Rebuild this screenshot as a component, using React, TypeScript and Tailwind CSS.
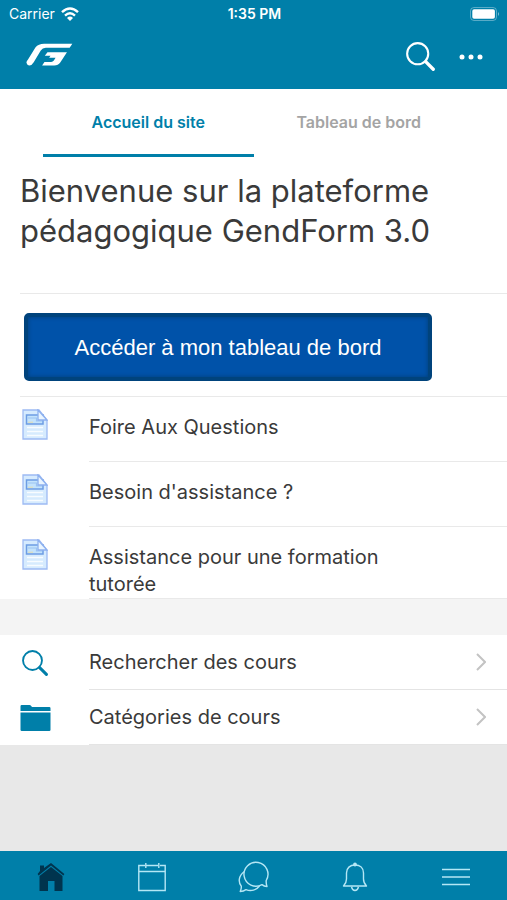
import type { ReactNode } from 'react';

type IconProps = { className?: string };

const LogoIcon = ({ className }: IconProps) => (
    <svg viewBox="80 126 140 68" className={className} fill="currentColor" aria-hidden="true">
        <path d="M82 186C80 183 83 179 86 175L108 139Q117 128 134 128H218L210 140H139Q129 140 124 148L103 183Q97 193 90 193Q84 193 82 186Z" />
        <path d="M144 153H202L182 184Q176 193 164 193H128L135 182H155Q160 182 163 178L168 170H149L153 164H136Z" />
    </svg>
);

const WifiIcon = ({ className }: IconProps) => (
    <svg viewBox="0 0 18 14" className={className} fill="none" stroke="currentColor" strokeWidth="2.4" aria-hidden="true">
        <path d="M1 5.2Q9-2.4 17 5.2M4 8.6Q9 4 14 8.6" />
        <path d="M6 11Q9 8.2 12 11L9 14Z" fill="currentColor" stroke="none" />
    </svg>
);

const BatteryIcon = ({ className }: IconProps) => (
    <svg viewBox="0 0 30 14" className={className} aria-hidden="true">
        <rect x="0.5" y="0.5" width="26" height="13" rx="3.5" fill="none" stroke="currentColor" opacity="0.35" />
        <rect x="2.3" y="2.3" width="22.6" height="9.4" rx="1.8" fill="currentColor" />
        <path d="M28 5Q30 7 28 9Z" fill="currentColor" opacity="0.5" />
    </svg>
);

const SearchIcon = ({ className }: IconProps) => (
    <svg viewBox="0 0 28 28" className={className} fill="none" stroke="currentColor" aria-hidden="true">
        <circle cx="11.3" cy="11.3" r="10.2" strokeWidth="2" />
        <path d="M19 19L26.3 26.3" strokeWidth="3.2" strokeLinecap="round" />
    </svg>
);

const DotsIcon = ({ className }: IconProps) => (
    <svg viewBox="0 0 24 6" className={className} fill="currentColor" aria-hidden="true">
        <circle cx="3" cy="3" r="2.5" />
        <circle cx="12" cy="3" r="2.5" />
        <circle cx="21" cy="3" r="2.5" />
    </svg>
);

const PageIcon = ({ className }: IconProps) => (
    <svg viewBox="0 0 26 31" className={className} aria-hidden="true">
        <path d="M1 1H17L25 11V30H1Z" fill="#d6ebfe" stroke="#9dbbf3" strokeWidth="1.3" />
        <path d="M4.5 6H21V15H4.5Z" fill="#c3e3fc" stroke="#6d9de3" strokeWidth="1.5" />
        <path d="M6 9H14.5V12H20" fill="none" stroke="#9cc4f2" strokeWidth="1.2" />
        <path d="M6 13.2H11" stroke="#e4deb3" />
        <path d="M16 1V11H25Z" fill="#e9f5ff" stroke="#8db0ef" strokeWidth="1.3" />
        <path d="M5 18.5H21M5 22.5H21M5 26.5H21" stroke="#f8fcff" strokeWidth="1.4" />
    </svg>
);

const FolderIcon = ({ className }: IconProps) => (
    <svg viewBox="0 0 31 26" className={className} fill="currentColor" aria-hidden="true">
        <path d="M0.5 6V1.2Q0.5 0 1.7 0H9.5Q10.5 0 11.2 1L12 2H29.3Q30.5 2 30.5 3.2V6Z" />
        <path d="M0.5 7.5H30.5V24.8Q30.5 26 29.3 26H1.7Q0.5 26 0.5 24.8Z" />
    </svg>
);

const ChevronIcon = ({ className }: IconProps) => (
    <svg viewBox="0 0 10 18" className={className} fill="none" stroke="currentColor" strokeWidth="2" aria-hidden="true">
        <path d="M1 1L9 9L1 17" />
    </svg>
);

const HomeIcon = ({ className }: IconProps) => (
    <svg viewBox="0 0 28 30" className={className} aria-hidden="true">
        <path d="M3 9V3.5H7V6L14 1L27.4 12L26.4 13.5L14 3.6L1.6 13.5L0.6 12Z" fill="currentColor" />
        <path d="M14 5L25.5 14V29H17.5V19H11V29H2.5V14Z" fill="currentColor" />
    </svg>
);

const CalendarIcon = ({ className }: IconProps) => (
    <svg viewBox="0 0 28 30" className={className} fill="none" stroke="currentColor" strokeWidth="1.4" aria-hidden="true">
        <path d="M7 3.5H0.8V28.5H27.2V3.5H22M8.5 3.5H20M0.8 9.5H27.2M7.8 1V6M20.8 1V6" />
    </svg>
);

const ChatIcon = ({ className }: IconProps) => (
    <svg viewBox="0 0 32 32" className={className} fill="none" stroke="currentColor" strokeWidth="1.4" strokeLinejoin="round" aria-hidden="true">
        <path d="M30 25.5Q27 25.2 25 23.6A12 12 0 1 1 29.2 19.5Q29 23 30 25.5Z" />
        <path d="M7.5 10.5C1 15 1.3 21.5 4.3 25.3Q4.5 28 3.2 30.5Q6.5 30.3 9 28.6C14 30.7 19.5 29 22.5 25" />
    </svg>
);

const BellIcon = ({ className }: IconProps) => (
    <svg viewBox="0 0 26 30" className={className} fill="none" stroke="currentColor" strokeWidth="1.4" strokeLinejoin="round" aria-hidden="true">
        <path d="M1.5 24C4 21.5 4.5 20 4.5 17V11C4.5 6 8 3 13 3S21.5 6 21.5 11V17C21.5 20 22 21.5 24.5 24ZM9.5 25Q10.5 28.5 13 28.5T16.5 25" />
        <circle cx="13" cy="2.5" r="1.2" fill="currentColor" />
    </svg>
);

const MenuIcon = ({ className }: IconProps) => (
    <svg viewBox="0 0 28 30" className={className} stroke="currentColor" strokeWidth="1.6" aria-hidden="true">
        <path d="M0 7.5H28M0 15H28M0 22.5H28" />
    </svg>
);

const activities = ['Foire Aux Questions', "Besoin d'assistance ?", 'Assistance pour une formation tutorée'];

const courseLinks = [
    { label: 'Rechercher des cours', icon: <SearchIcon className="mx-[2px] size-[26px]" /> },
    { label: 'Catégories de cours', icon: <FolderIcon className="h-[26px] w-[31px]" /> },
];

const navItems: { label: string; icon: ReactNode; active?: boolean }[] = [
    { label: 'Accueil', icon: <HomeIcon className="h-[30px] w-[28px]" />, active: true },
    { label: 'Calendrier', icon: <CalendarIcon className="h-[30px] w-[28px]" /> },
    { label: 'Messages', icon: <ChatIcon className="size-8" /> },
    { label: 'Notifications', icon: <BellIcon className="h-[30px] w-[26px]" /> },
    { label: 'Plus', icon: <MenuIcon className="h-[30px] w-[28px]" /> },
];

export default function App() {
    return (
        <div className="flex min-h-screen flex-col bg-[#e8e8e8] font-['Inter',sans-serif] text-[#3a3a3a]">
            <header className="bg-[#007fa9] text-white">
                {/* Status bar */}
                <div className="grid h-7 grid-cols-3 items-center pr-[7px] pl-[9px] text-sm">
                    <div className="flex items-center gap-[6px]">
                        <span>Carrier</span>
                        <WifiIcon className="h-[14px] w-[18px]" />
                    </div>
                    <span className="text-center font-semibold">1:35 PM</span>
                    <BatteryIcon className="h-[14px] w-[30px] justify-self-end" />
                </div>
                {/* Toolbar */}
                <div className="flex h-[61px] items-center justify-between pr-6 pb-1 pl-[26px]">
                    <a href="#" aria-label="GendForm" className="pb-1">
                        <LogoIcon className="h-[23px] w-[47px]" />
                    </a>
                    <div className="flex items-center gap-6">
                        <button type="button" aria-label="Rechercher">
                            <SearchIcon className="size-[29px]" />
                        </button>
                        <button type="button" aria-label="Plus d'options">
                            <DotsIcon className="h-[6px] w-6" />
                        </button>
                    </div>
                </div>
            </header>

            <main>
                <div className="bg-white">
                    <div role="tablist" className="grid grid-cols-2 px-[43px] text-base font-semibold">
                        <button type="button" role="tab" aria-selected="true" className="h-[68px] border-b-3 border-[#007fa9] text-[#007fa9]">
                            Accueil du site
                        </button>
                        <button type="button" role="tab" aria-selected="false" className="h-[68px] border-b-3 border-transparent text-[#a4a4a4]">
                            Tableau de bord
                        </button>
                    </div>

                    <section className="pl-5">
                        <h1 className="border-b border-[#e9e9e9] pt-[14px] pb-[42px] text-[31px] leading-10">
                            Bienvenue sur la plateforme pédagogique GendForm 3.0
                        </h1>
                        <div className="border-b border-[#e9e9e9] pt-[19px] pr-[75px] pb-[15px] pl-1">
                            <a
                                href="#"
                                className="flex h-[68px] items-center justify-center rounded-[5px] border-4 border-[#00437c] bg-[#0052a9] font-['Liberation_Sans',sans-serif] text-[22px] text-white shadow-[inset_0_0_4px_#003f78]"
                            >
                                Accéder à mon tableau de bord
                            </a>
                        </div>
                    </section>

                    <ul className="text-xl leading-[27px]">
                        {activities.map((label) => (
                            <li key={label}>
                                <a href="#" className="flex gap-[41px] pl-[22px]">
                                    <PageIcon className="mt-3 h-[31px] w-[26px] shrink-0" />
                                    <span className="min-h-[65px] flex-1 border-b border-[#e9e9e9] pt-[17px] pr-[100px]">{label}</span>
                                </a>
                            </li>
                        ))}
                    </ul>
                </div>

                <div className="h-9 bg-[#f4f4f4]" />

                <ul className="bg-white text-xl">
                    {courseLinks.map(({ label, icon }) => (
                        <li key={label}>
                            <a href="#" className="flex items-center pl-5">
                                <span className="w-[69px] shrink-0 text-[#007fa9]">{icon}</span>
                                <span className="flex h-[55px] flex-1 items-center justify-between border-b border-[#e4e4e4] pr-[21px]">
                                    {label}
                                    <ChevronIcon className="h-[18px] w-[10px] text-[#c3c3c3]" />
                                </span>
                            </a>
                        </li>
                    ))}
                </ul>
            </main>

            <nav className="sticky bottom-0 mt-auto grid h-[49px] grid-cols-5 bg-[#007fa9]">
                {navItems.map(({ label, icon, active }) => (
                    <a
                        key={label}
                        href="#"
                        aria-label={label}
                        aria-current={active ? 'page' : undefined}
                        className={`flex items-center justify-center pt-[2px] ${active ? 'text-[#00344e]' : 'text-[#b5e7f5]'}`}
                    >
                        {icon}
                    </a>
                ))}
            </nav>
        </div>
    );
}
